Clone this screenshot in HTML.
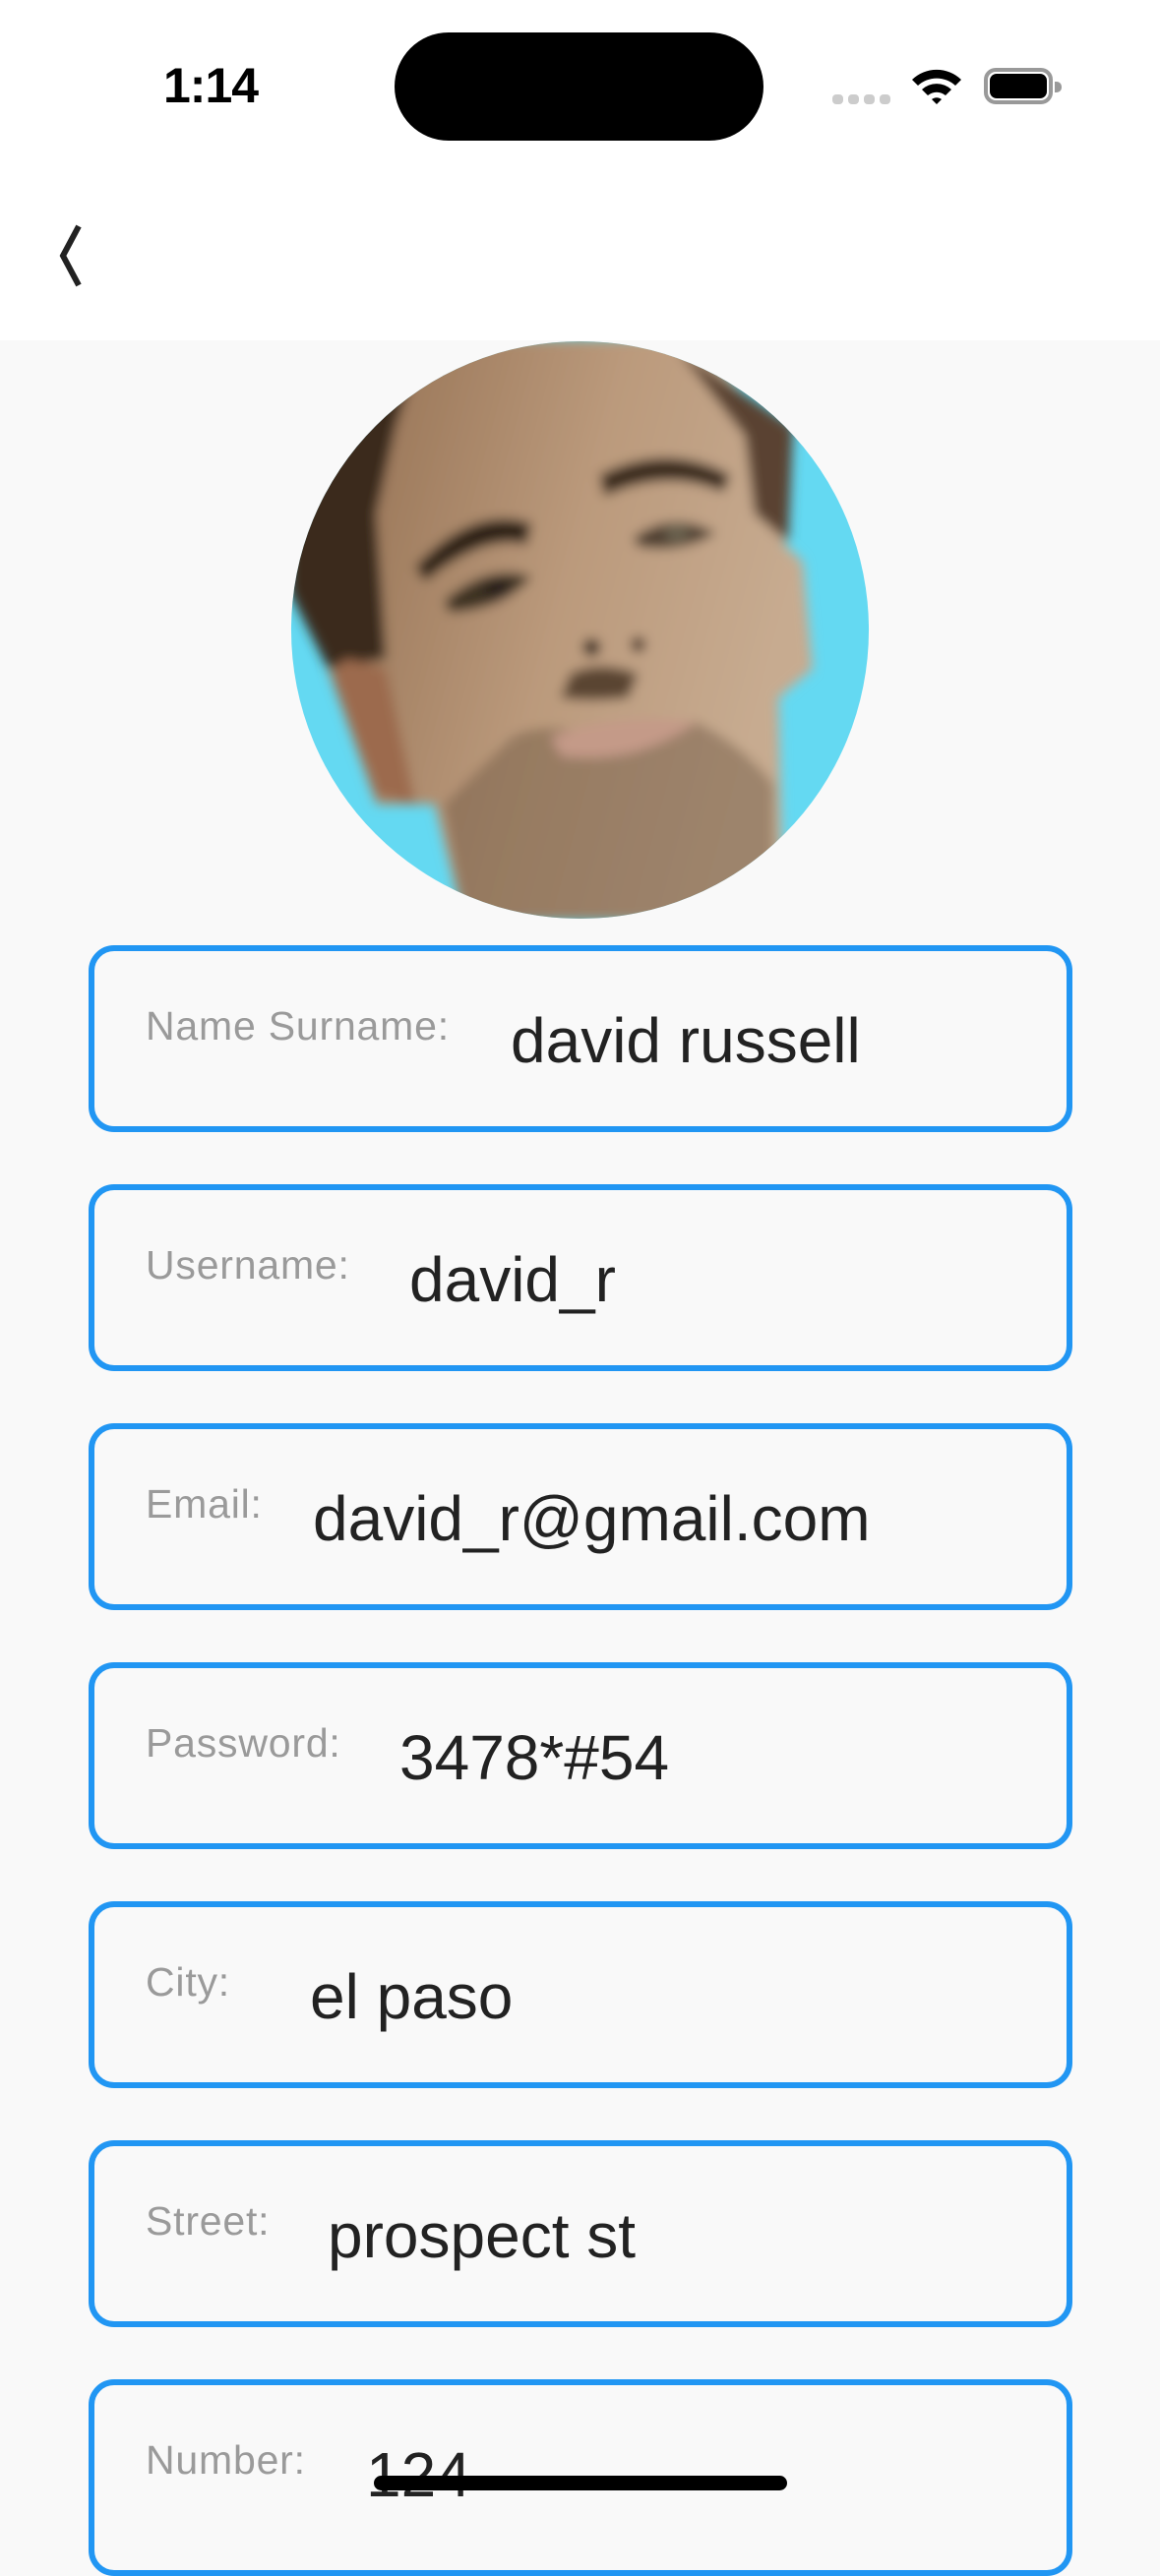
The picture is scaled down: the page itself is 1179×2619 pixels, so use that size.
<!DOCTYPE html>
<html><head><meta charset="utf-8">
<style>
*{margin:0;padding:0;box-sizing:border-box}
body{width:1179px;height:2556px;overflow:hidden;background:#f9f9f9;position:relative;font-family:"Liberation Sans",sans-serif}
.hdr{position:absolute;left:0;top:0;width:1179px;height:346px;background:#fff}
.time{position:absolute;left:166px;top:58px;font-size:50px;font-weight:bold;color:#000;letter-spacing:-1px}
.island{position:absolute;left:401px;top:33px;width:375px;height:110px;background:#000;border-radius:55px}
.dot{position:absolute;top:96px;width:11px;height:10px;border-radius:4px;background:#ccc}
.box{position:absolute;left:90px;width:1000px;height:190px;border:6px solid #2196f3;border-radius:26px}
.lab{position:absolute;left:52px;top:53px;font-size:41px;color:#9a9a9a;white-space:nowrap;letter-spacing:0.8px}
.val{position:absolute;top:54px;font-size:64px;color:#222;white-space:nowrap}
.home{position:absolute;left:380px;top:2517px;width:420px;height:15px;background:#000;border-radius:8px}
</style></head><body>
<div class="hdr"></div>
<div class="time">1:14</div>
<div class="island"></div>
<div class="dot" style="left:846px"></div><div class="dot" style="left:862px"></div><div class="dot" style="left:878px"></div><div class="dot" style="left:894px"></div>
<svg style="position:absolute;left:924px;top:66px" width="56" height="42" viewBox="0 0 56 42">
<path d="M3 15 A36 36 0 0 1 53 15 L47 21 A28 28 0 0 0 9 21 Z" fill="#000"/>
<path d="M13 25 A22 22 0 0 1 43 25 L37 31 A14 14 0 0 0 19 31 Z" fill="#000"/>
<path d="M23 35 A8 8 0 0 1 33 35 L28 40 Z" fill="#000"/>
</svg>
<div style="position:absolute;left:1000px;top:69px;width:70px;height:37px;border:4px solid #999;border-radius:12px"></div>
<div style="position:absolute;left:1006px;top:75px;width:58px;height:25px;background:#000;border-radius:7px"></div>
<div style="position:absolute;left:1072px;top:83px;width:7px;height:11px;background:#999;border-radius:0 5px 5px 0"></div>
<svg style="position:absolute;left:40px;top:225px" width="50" height="70" viewBox="0 0 50 70">
<path d="M40 5 L24 35 L40 65" fill="none" stroke="#222" stroke-width="6"/>
</svg>
<svg style="position:absolute;left:294px;top:345px" width="591" height="591" viewBox="0 0 600 600">
<defs><clipPath id="c"><circle cx="300" cy="300" r="298"/></clipPath>
<filter id="b"><feGaussianBlur stdDeviation="6"/></filter>
<linearGradient id="sk" x1="0" y1="0" x2="1" y2="0.3"><stop offset="0" stop-color="#8e6a4c"/><stop offset="0.6" stop-color="#bb9a7c"/><stop offset="1" stop-color="#c7ab90"/></linearGradient></defs>
<g clip-path="url(#c)">
<rect width="600" height="600" fill="#64d9f2"/>
<g filter="url(#b)">
<path d="M60 0 L420 0 L515 110 L510 210 L530 230 L540 340 L505 370 L510 600 L180 600 L150 480 L90 480 L40 340 L5 250 L10 100 Z" fill="url(#sk)"/>
<path d="M0 120 L140 0 L110 90 L90 180 L100 330 L40 340 L0 260 Z" fill="#3a2a1e"/>
<path d="M400 10 L520 90 L515 210 L480 180 L470 100 Z" fill="#5a4330"/>
<path d="M130 235 Q190 170 250 190 L245 212 Q200 200 140 250 Z" fill="#2e2016"/>
<path d="M320 140 Q390 105 455 140 L448 158 Q390 132 325 162 Z" fill="#3a2a1e"/>
<path d="M160 270 Q205 230 250 245 Q220 280 165 282 Z" fill="#3d3024"/>
<ellipse cx="215" cy="258" rx="14" ry="11" fill="#2a241c"/>
<path d="M355 205 Q395 175 440 200 Q405 222 360 214 Z" fill="#4f4030"/>
<ellipse cx="400" cy="200" rx="12" ry="10" fill="#6b6250"/>
<ellipse cx="312" cy="318" rx="9" ry="9" fill="#2a1a12"/><ellipse cx="360" cy="315" rx="7" ry="8" fill="#3a2015"/>
<path d="M290 345 Q320 330 360 345 L350 370 Q310 375 280 370 Z" fill="#5a4432"/>
<path d="M230 410 Q260 395 300 405 L420 395 Q470 420 500 460 L500 600 L180 600 L160 480 Z" fill="#6b5440" opacity="0.45"/>
<path d="M270 410 Q340 385 420 395 Q360 440 280 430 Z" fill="#c49a88"/>
<path d="M60 330 Q40 340 50 360 L90 470 L130 480 L100 340 Z" fill="#9c6a4e"/>
</g></g></svg>

<div class="box" style="top:961px"><div class="lab">Name Surname:</div><div class="val" style="left:423px">david russell</div></div>
<div class="box" style="top:1204px"><div class="lab">Username:</div><div class="val" style="left:320px">david_r</div></div>
<div class="box" style="top:1447px"><div class="lab">Email:</div><div class="val" style="left:222px">david_r@gmail.com</div></div>
<div class="box" style="top:1690px"><div class="lab">Password:</div><div class="val" style="left:310px">3478*#54</div></div>
<div class="box" style="top:1933px"><div class="lab">City:</div><div class="val" style="left:219px">el paso</div></div>
<div class="box" style="top:2176px"><div class="lab">Street:</div><div class="val" style="left:237px">prospect st</div></div>
<div class="box" style="top:2419px;height:200px"><div class="lab">Number:</div><div class="val" style="left:276px">124</div></div>
<div class="home"></div>
</body></html>
